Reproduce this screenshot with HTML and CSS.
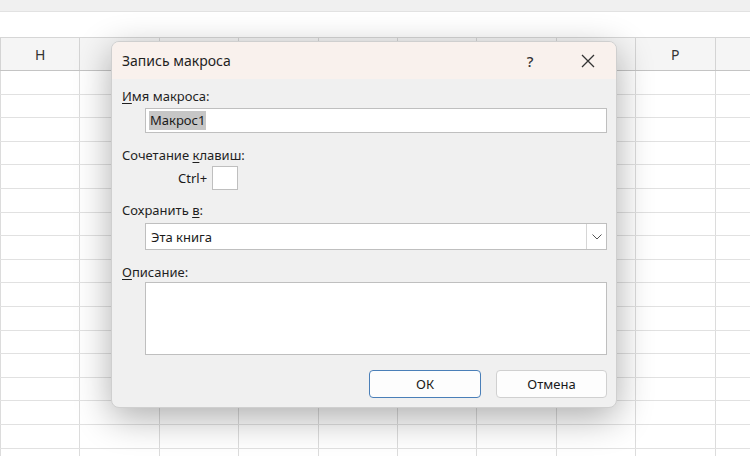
FILE: index.html
```html
<!DOCTYPE html>
<html lang="ru">
<head>
  <meta charset="UTF-8">
  <meta name="viewport" content="width=device-width, initial-scale=1.0">
  <title>Запись макроса</title>
  <link rel="stylesheet" href="styles.css">
</head>
<body>
  <!-- Лист Excel на фоне -->
  <div class="sheet">
    <div class="ribbon-edge"></div>
    <div class="formula-bar"></div>
    <div class="col-headers">
      <div class="col">H</div>
      <div class="col"></div>
      <div class="col"></div>
      <div class="col"></div>
      <div class="col"></div>
      <div class="col"></div>
      <div class="col"></div>
      <div class="col"></div>
      <div class="col">P</div>
      <div class="col"></div>
    </div>
    <div class="cells"></div>
  </div>

  <!-- Диалог -->
  <div class="dialog">
    <div class="title-bar">
      <span class="title">Запись макроса</span>
      <span class="help">?</span>
      <span class="close">
        <svg width="14" height="14" viewBox="0 0 14 14">
          <path d="M1 1 L13 13 M13 1 L1 13" stroke="#333" stroke-width="1.3" fill="none"/>
        </svg>
      </span>
    </div>

    <div class="dialog-body">
      <div class="label first"><u>И</u>мя макроса:</div>
      <div class="field"><span class="selected">Макрос1</span></div>

      <div class="label gap-lg">Сочетание <u>к</u>лавиш:</div>
      <div class="shortcut">
        <span>Ctrl+</span>
        <div class="key-box"></div>
      </div>

      <div class="label gap-md">Сохранить <u>в</u>:</div>
      <div class="field select">
        <span>Эта книга</span>
        <span class="drop">
          <svg width="10" height="6" viewBox="0 0 10 6">
            <path d="M0.5 0.5 L5 5 L9.5 0.5" stroke="#555" stroke-width="1" fill="none"/>
          </svg>
        </span>
      </div>

      <div class="label gap-lg"><u>О</u>писание:</div>
      <div class="field textarea"></div>

      <div class="buttons">
        <button class="btn primary">ОК</button>
        <button class="btn">Отмена</button>
      </div>
    </div>
  </div>
</body>
</html>
```

FILE: styles.css
```css
body {
  margin: 0;
  width: 750px;
  height: 456px;
  overflow: hidden;
  background: #ffffff;
  font-family: "Noto Sans", "Open Sans", sans-serif;
  color: #1a1a1a;
}

/* Лист */
.sheet {
  display: flex;
  flex-direction: column;
  height: 100%;
  overflow: hidden;
}

.ribbon-edge {
  height: 11px;
  background: #f0f0f0;
  border-bottom: 1px solid #e2e2e2;
}

.formula-bar {
  height: 25px;
  background: #ffffff;
  border-bottom: 1px solid #d6d6d6;
}

.col-headers {
  display: flex;
  height: 32px;
  background: #f5f5f5;
  border-bottom: 1px solid #c4c4c4;
  flex-shrink: 0;
}

.col {
  flex: 0 0 79.4px;
  box-sizing: border-box;
  border-left: 1px solid #d4d4d4;
  display: flex;
  align-items: center;
  justify-content: center;
  font-size: 14px;
  color: #333;
}

.cells {
  flex: 1;
  background-color: #ffffff;
  background-image:
    repeating-linear-gradient(to bottom, transparent 0, transparent 22.6px, #e1e1e1 22.6px, #e1e1e1 23.6px),
    repeating-linear-gradient(to right, #dcdcdc 0, #dcdcdc 1px, transparent 1px, transparent 79.4px);
}

/* Диалог */
.dialog {
  position: absolute;
  left: 111px;
  top: 41px;
  width: 506px;
  height: 367px;
  box-sizing: border-box;
  background: #f0f0f0;
  border: 1px solid #cfcfcf;
  border-radius: 8px;
  box-shadow: 0 10px 36px rgba(0, 0, 0, 0.32);
  overflow: hidden;
}

.title-bar {
  height: 37px;
  background: #f9f1ed;
  display: flex;
  align-items: center;
  padding-left: 10px;
}

.title {
  flex: 1;
  font-size: 14px;
  color: #1f1f1f;
}

.help {
  width: 20px;
  text-align: center;
  font-size: 15px;
  font-weight: 500;
  color: #333;
  margin-right: 38px;
}

.close {
  width: 20px;
  display: flex;
  justify-content: center;
  margin-right: 18px;
}

.dialog-body {
  display: flex;
  flex-direction: column;
  padding: 0 9px 0 10px;
}

.label {
  font-size: 13px;
  line-height: 16px;
  color: #1f1f1f;
}

.label u {
  text-decoration-thickness: 1px;
  text-underline-offset: 2px;
}

.label.first {
  margin-top: 9px;
}

.gap-lg {
  margin-top: 14px;
}

.gap-md {
  margin-top: 12px;
}

.field {
  margin-left: 23px;
  box-sizing: border-box;
  background: #ffffff;
  border: 1px solid #bfbfbf;
  height: 25px;
  margin-top: 4px;
  display: flex;
  align-items: center;
  padding-left: 3px;
  font-size: 13px;
}

.selected {
  background: #c6c6c6;
  padding: 1px 1px;
  line-height: 17px;
}

.shortcut {
  display: flex;
  align-items: center;
  margin-top: 3px;
  margin-left: 56px;
  gap: 5px;
  font-size: 13px;
}

.key-box {
  width: 26px;
  height: 24px;
  box-sizing: border-box;
  background: #ffffff;
  border: 1px solid #bfbfbf;
}

.select {
  height: 27px;
  margin-top: 5px;
  padding-left: 5px;
  justify-content: space-between;
}

.drop {
  width: 20px;
  height: 25px;
  box-sizing: border-box;
  border-left: 1px solid #d6d6d6;
  display: flex;
  align-items: center;
  justify-content: center;
}

.textarea {
  height: 73px;
  margin-top: 2px;
}

.buttons {
  display: flex;
  justify-content: flex-end;
  gap: 15px;
  margin-top: 15px;
}

.btn {
  height: 28px;
  width: 111px;
  box-sizing: border-box;
  background: #fdfdfd;
  border: 1px solid #d0d0d0;
  border-radius: 4px;
  font-family: "Noto Sans", "Open Sans", sans-serif;
  font-size: 13px;
  color: #1a1a1a;
}

.btn.primary {
  width: 112px;
  border: 1.5px solid #4a7fb8;
}
```
